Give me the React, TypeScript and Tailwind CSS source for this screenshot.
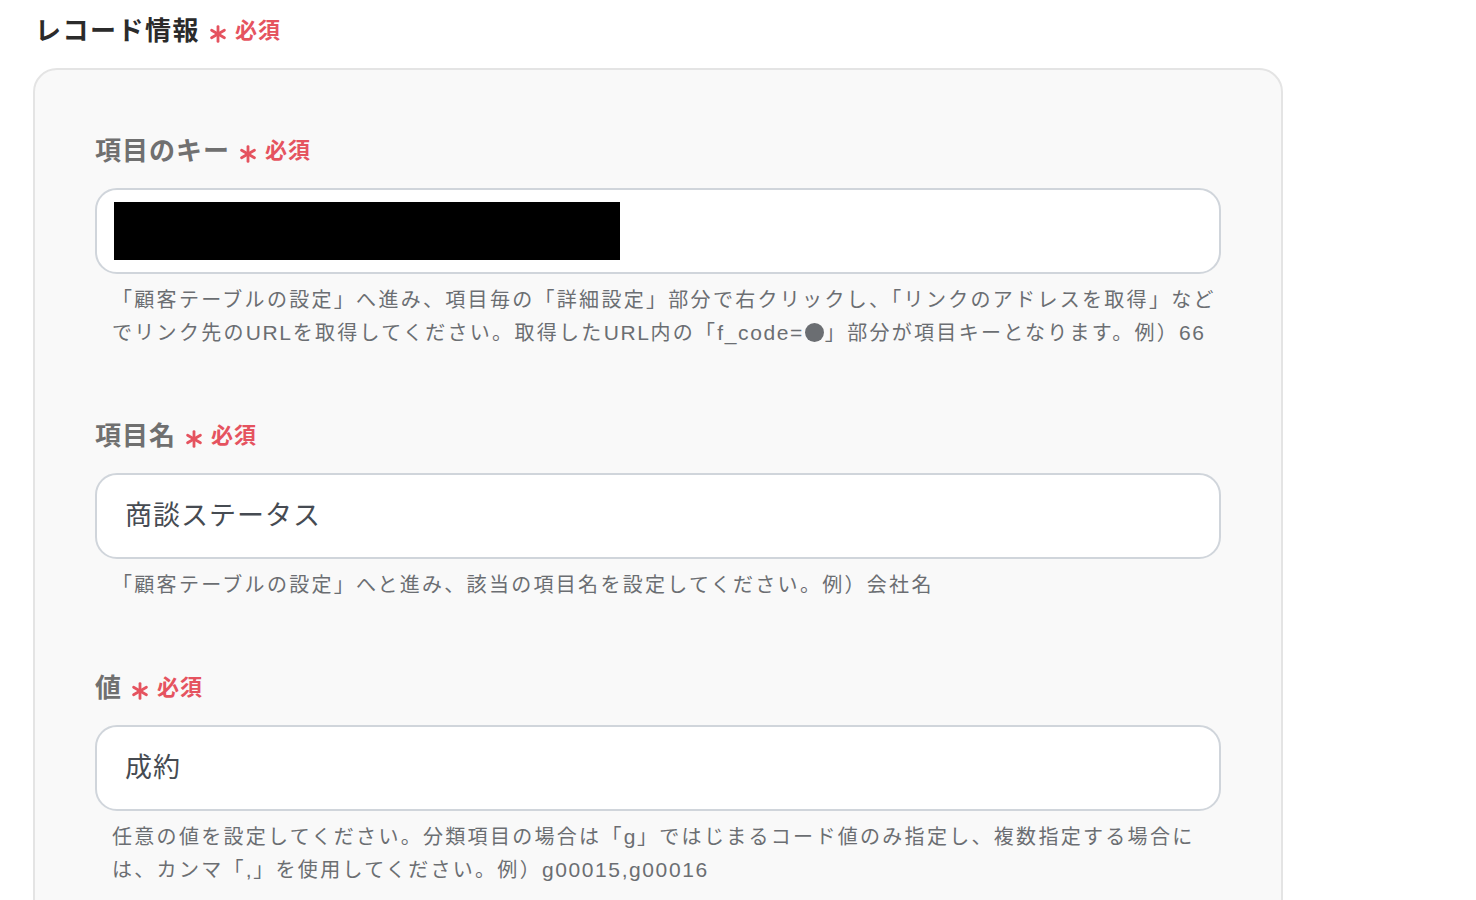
import React from "react";

const font = { fontFamily: '"Liberation Sans", "Noto Sans CJK JP", sans-serif' };

function Asterisk() {
  return (
    <svg width="18" height="18" viewBox="0 0 18 18" className="mr-[8px] translate-y-[3px]" fill="none">
      <g stroke="#e5535f" strokeWidth="2.8" strokeLinecap="round">
        <line x1="9" y1="1.6" x2="9" y2="16.4" />
        <line x1="2.6" y1="5.3" x2="15.4" y2="12.7" />
        <line x1="2.6" y1="12.7" x2="15.4" y2="5.3" />
      </g>
    </svg>
  );
}

function Required() {
  return (
    <span className="ml-[9px] inline-flex items-center text-[22px] font-bold text-[#e5535f] tracking-[1px]">
      <Asterisk />
      必須
    </span>
  );
}

function Label({ children }: { children: React.ReactNode }) {
  return (
    <div className="flex h-[36px] items-center text-[26px] font-bold leading-[36px] text-[#707070] tracking-[1px]">
      <span>{children}</span>
      <Required />
    </div>
  );
}

function L({ children }: { children: React.ReactNode }) {
  return <span className="text-[21px] leading-none tracking-[1.6px]">{children}</span>;
}

function Help({ children }: { children: React.ReactNode }) {
  return (
    <div className="mt-[10px] pl-[17px] text-[20px] leading-[33px] text-[#6b6e72] tracking-[2.3px]">
      {children}
    </div>
  );
}

function Line({ children }: { children: React.ReactNode }) {
  return <div className="h-[33px] whitespace-nowrap">{children}</div>;
}

export default function App() {
  return (
    <div className="min-h-[900px] h-[900px] overflow-hidden bg-white pl-[33px] pt-[13px]" style={font}>
      <div className="flex h-[36px] items-center pl-[2px] text-[26px] font-bold leading-[36px] text-[#2b2b2b] tracking-[1.5px]">
        <span>レコード情報</span>
        <Required />
      </div>
      <div className="mt-[19px] h-[900px] w-[1250px] rounded-[24px] border-2 border-[#e4e4e4] bg-[#f9f9f9] pl-[60px] pr-[60px] pt-[63px]">
        {/* section 1 */}
        <Label>項目のキー</Label>
        <div className="mt-[19px] flex h-[86px] w-[1126px] items-center rounded-[22px] border-2 border-[#d0d5db] bg-white pl-[17px]">
          <div className="h-[58px] w-[506px] bg-black" />
        </div>
        <Help>
          <Line>「顧客テーブルの設定」へ進み、項目毎の「詳細設定」部分で右クリックし、「リンクのアドレスを取得」など</Line>
          <Line>
            でリンク先の<L>URL</L>を取得してください。取得した<L>URL</L>内の「<L>f_code=</L>
            <span className="mx-[1px] inline-block h-[19px] w-[19px] translate-y-[2px] rounded-full bg-[#6b6e72]" />
            」部分が項目キーとなります。例）<L>66</L>
          </Line>
        </Help>

        {/* section 2 */}
        <div className="mt-[68px]">
          <Label>項目名</Label>
        </div>
        <div className="mt-[19px] flex h-[86px] w-[1126px] items-center rounded-[22px] border-2 border-[#d0d5db] bg-white pl-[28px] text-[27px] text-[#464b52] tracking-[1px]">
          商談ステータス
        </div>
        <Help>
          <Line>「顧客テーブルの設定」へと進み、該当の項目名を設定してください。例）会社名</Line>
        </Help>

        {/* section 3 */}
        <div className="mt-[68px]">
          <Label>値</Label>
        </div>
        <div className="mt-[19px] flex h-[86px] w-[1126px] items-center rounded-[22px] border-2 border-[#d0d5db] bg-white pl-[28px] text-[27px] text-[#464b52] tracking-[1px]">
          成約
        </div>
        <Help>
          <Line>
            任意の値を設定してください。分類項目の場合は「<L>g</L>」ではじまるコード値のみ指定し、複数指定する場合に
          </Line>
          <Line>
            は、カンマ「<L>,</L>」を使用してください。例）<L>g00015,g00016</L>
          </Line>
        </Help>
      </div>
    </div>
  );
}
